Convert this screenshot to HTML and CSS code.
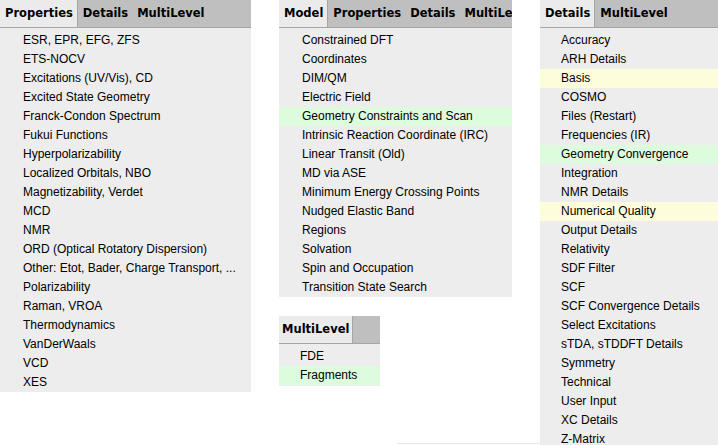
FILE: index.html
```html
<!DOCTYPE html>
<html>
<head>
<meta charset="utf-8">
<link rel="stylesheet" href="styles.css">
</head>
<body>
<div class="canvas">
  <div class="col col-a">
    <div class="panel p1">
      <div class="tabs">
        <div class="tab active">Properties</div>
        <div class="tab">Details</div>
        <div class="tab">MultiLevel</div>
      </div>
      <ul class="list">
        <li>ESR, EPR, EFG, ZFS</li>
        <li>ETS-NOCV</li>
        <li>Excitations (UV/Vis), CD</li>
        <li>Excited State Geometry</li>
        <li>Franck-Condon Spectrum</li>
        <li>Fukui Functions</li>
        <li>Hyperpolarizability</li>
        <li>Localized Orbitals, NBO</li>
        <li>Magnetizability, Verdet</li>
        <li>MCD</li>
        <li>NMR</li>
        <li>ORD (Optical Rotatory Dispersion)</li>
        <li>Other: Etot, Bader, Charge Transport, ...</li>
        <li>Polarizability</li>
        <li>Raman, VROA</li>
        <li>Thermodynamics</li>
        <li>VanDerWaals</li>
        <li>VCD</li>
        <li>XES</li>
      </ul>
    </div>
  </div>
  <div class="col col-b">
    <div class="panel p2">
      <div class="tabs">
        <div class="tab active">Model</div>
        <div class="tab">Properties</div>
        <div class="tab">Details</div>
        <div class="tab">MultiLevel</div>
      </div>
      <ul class="list">
        <li>Constrained DFT</li>
        <li>Coordinates</li>
        <li>DIM/QM</li>
        <li>Electric Field</li>
        <li class="green">Geometry Constraints and Scan</li>
        <li>Intrinsic Reaction Coordinate (IRC)</li>
        <li>Linear Transit (Old)</li>
        <li>MD via ASE</li>
        <li>Minimum Energy Crossing Points</li>
        <li>Nudged Elastic Band</li>
        <li>Regions</li>
        <li>Solvation</li>
        <li>Spin and Occupation</li>
        <li>Transition State Search</li>
      </ul>
    </div>
    <div class="panel p3">
      <div class="tabs">
        <div class="tab active">MultiLevel</div>
      </div>
      <ul class="list">
        <li>FDE</li>
        <li class="green">Fragments</li>
      </ul>
    </div>
    <div class="rule"></div>
  </div>
  <div class="col col-c">
    <div class="panel p4">
      <div class="tabs">
        <div class="tab active">Details</div>
        <div class="tab">MultiLevel</div>
      </div>
      <ul class="list">
        <li>Accuracy</li>
        <li>ARH Details</li>
        <li class="yellow">Basis</li>
        <li>COSMO</li>
        <li>Files (Restart)</li>
        <li>Frequencies (IR)</li>
        <li class="green">Geometry Convergence</li>
        <li>Integration</li>
        <li>NMR Details</li>
        <li class="yellow">Numerical Quality</li>
        <li>Output Details</li>
        <li>Relativity</li>
        <li>SDF Filter</li>
        <li>SCF</li>
        <li>SCF Convergence Details</li>
        <li>Select Excitations</li>
        <li>sTDA, sTDDFT Details</li>
        <li>Symmetry</li>
        <li>Technical</li>
        <li>User Input</li>
        <li>XC Details</li>
        <li>Z-Matrix</li>
      </ul>
    </div>
  </div>
</div>
</body>
</html>
```

FILE: styles.css
```css
html, body {
  margin: 0;
  padding: 0;
  background: #ffffff;
  width: 718px;
  height: 445px;
  overflow: hidden;
}

.canvas {
  display: flex;
  align-items: flex-start;
  font-family: "Liberation Sans", Arial, sans-serif;
  color: #000;
}

.col {
  display: flex;
  flex-direction: column;
}

.col-a { width: 251px; }
.col-b { width: 233px; margin-left: 28px; }
.col-c { width: 178px; margin-left: 28px; }

.panel {
  background: #ededed;
  overflow: hidden;
}

.p2 { margin-bottom: 19px; }
.p3 { width: 101px; padding-bottom: 1px; }

.rule {
  margin-top: 57px;
  margin-left: 118px;
  width: 143px;
  height: 1px;
  background: #e6e6e6;
}

.tabs {
  display: flex;
  height: 27px;
  background: #bfbfbf;
  border-bottom: 1px solid #a6a6a6;
  overflow: hidden;
  white-space: nowrap;
}

.tab {
  font-family: "DejaVu Sans", Verdana, sans-serif;
  font-weight: bold;
  font-size: 11.5px;
  line-height: 27px;
  padding: 0 4px 0 5px;
  flex: none;
}

.p3 .tab { padding: 0 3px 0 3px; }

.tab.active {
  background: #ebebeb;
  border-right: 1px solid #a6a6a6;
}

.list {
  list-style: none;
  margin: 0;
  padding: 3px 0 0 0;
}

.list li {
  height: 19px;
  line-height: 19px;
  font-size: 12px;
  padding-left: 23px;
  white-space: nowrap;
}

.p3 .list li, .p4 .list li { padding-left: 21px; }

.list li.green { background: #ddfcdd; }
.list li.yellow { background: #fdfddc; }
```
